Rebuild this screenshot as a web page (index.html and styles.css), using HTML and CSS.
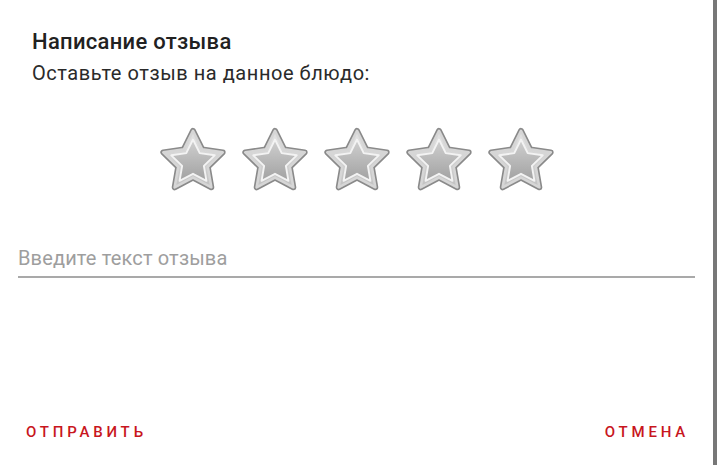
FILE: index.html
```html
<!DOCTYPE html>
<html lang="ru">
<head>
<meta charset="utf-8">
<title>Написание отзыва</title>
<link rel="stylesheet" href="styles.css">
</head>
<body>
<svg class="defs" width="0" height="0" aria-hidden="true">
  <defs>
    <linearGradient id="rim" x1="0" y1="0" x2="0" y2="1">
      <stop offset="0" stop-color="#e4e4e4"/>
      <stop offset="1" stop-color="#c2c2c2"/>
    </linearGradient>
    <linearGradient id="core" x1="0" y1="0" x2="0" y2="1">
      <stop offset="0" stop-color="#d0d0d0"/>
      <stop offset="0.55" stop-color="#b6b6b6"/>
      <stop offset="1" stop-color="#a2a2a2"/>
    </linearGradient>
    <polygon id="shape" points="50,4 64.11,32.58 95.65,37.17 72.83,59.42 78.21,90.83 50,76 21.79,90.83 27.17,59.42 4.35,37.17 35.89,32.58"/>
    <filter id="soft" x="-10%" y="-10%" width="120%" height="120%">
      <feGaussianBlur stdDeviation="0.8"/>
    </filter>
    <g id="star">
      <g filter="url(#soft)">
        <g transform="translate(50 50) scale(0.93) translate(-50 -50)">
          <use href="#shape" fill="#8a8a8a" stroke="#8a8a8a" stroke-width="9" stroke-linejoin="round"/>
          <use href="#shape" fill="url(#rim)" stroke="#d6d6d6" stroke-width="4" stroke-linejoin="round"/>
        </g>
        <g transform="translate(50 53) scale(0.68) translate(-50 -53)">
          <use href="#shape" fill="url(#core)" stroke="#f3f3f3" stroke-width="4" stroke-linejoin="round"/>
        </g>
      </g>
    </g>
  </defs>
</svg>
<div class="dialog">
  <h1 class="title">Написание отзыва</h1>
  <p class="subtitle">Оставьте отзыв на данное блюдо:</p>
  <div class="stars">
    <svg class="star" viewBox="0 0 100 95"><use href="#star"/></svg>
    <svg class="star" viewBox="0 0 100 95"><use href="#star"/></svg>
    <svg class="star" viewBox="0 0 100 95"><use href="#star"/></svg>
    <svg class="star" viewBox="0 0 100 95"><use href="#star"/></svg>
    <svg class="star" viewBox="0 0 100 95"><use href="#star"/></svg>
  </div>
  <input class="field" type="text" placeholder="Введите текст отзыва">
  <div class="actions">
    <button class="btn">ОТПРАВИТЬ</button>
    <button class="btn">ОТМЕНА</button>
  </div>
</div>
</body>
</html>
```

FILE: styles.css
```css
html, body {
  margin: 0;
  padding: 0;
}
body {
  background: #777777;
  font-family: Roboto, "Noto Sans", sans-serif;
  width: 717px;
  height: 465px;
  overflow: hidden;
}
.defs {
  position: absolute;
}
.dialog {
  width: 713px;
  height: 465px;
  background: #ffffff;
  box-sizing: border-box;
  padding-top: 29px;
  padding-bottom: 17px;
  display: flex;
  flex-direction: column;
}
.title {
  margin: 0 0 0 32px;
  font-size: 22px;
  line-height: 26px;
  font-weight: 500;
  letter-spacing: 0.3px;
  color: #212121;
}
.subtitle {
  margin: 6px 0 0 32px;
  font-size: 20px;
  line-height: 24px;
  letter-spacing: 0.55px;
  color: #2a2a2a;
}
.stars {
  margin-top: 40px;
  display: flex;
  justify-content: center;
  gap: 12px;
  padding-left: 1px;
}
.star {
  width: 70px;
  height: 68px;
  display: block;
}
.field {
  margin: 53px 18px 0 18px;
  padding: 0 0 6px 0;
  border: none;
  border-bottom: 2px solid #a9a9a9;
  outline: none;
  font-family: Roboto, "Noto Sans", sans-serif;
  font-size: 20px;
  line-height: 24px;
  letter-spacing: 0.15px;
  background: transparent;
  color: #212121;
}
.field::placeholder {
  color: #9e9e9e;
}
.actions {
  margin-top: auto;
  padding: 0 16px 0 18px;
  display: flex;
  justify-content: space-between;
}
.btn {
  border: none;
  background: transparent;
  padding: 8px;
  font-family: Roboto, "Noto Sans", sans-serif;
  font-size: 15px;
  line-height: 16px;
  font-weight: 500;
  letter-spacing: 3.8px;
  color: #c8161d;
}
```
